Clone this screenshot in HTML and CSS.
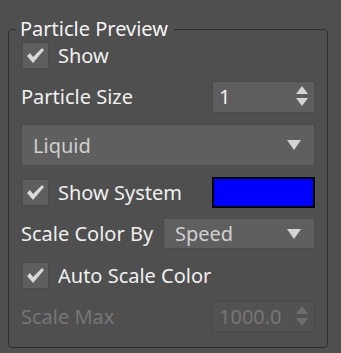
FILE: index.html
```html
<!DOCTYPE html>
<html lang="en">
<head>
    <meta charset="UTF-8">
    <title>Particle Preview</title>
    <link rel="stylesheet" href="styles.css">
</head>
<body>
    <fieldset class="group">
        <legend>Particle Preview</legend>

        <div class="row row-check">
            <span class="check">
                <svg width="27" height="27" viewBox="0 0 27 27"><path d="M5 14 L8 11 L11 15 L20 6 L22 8 L11 21 Z" fill="#d8d8d8"/></svg>
            </span>
            <span class="label">Show</span>
        </div>

        <div class="row row-spin">
            <span class="label">Particle Size</span>
            <div class="spin">
                <span class="spin-value">1</span>
                <span class="arrows">
                    <svg width="12" height="21" viewBox="0 0 12 21"><path d="M6 0 L12 8 L0 8 Z M0 12 L12 12 L6 20 Z" fill="#d4d4d4"/></svg>
                </span>
            </div>
        </div>

        <div class="row row-combo">
            <div class="combo combo-wide">
                <span class="combo-value">Liquid</span>
                <svg width="14" height="10" viewBox="0 0 14 10"><path d="M0 0 L14 0 L7 10 Z" fill="#d4d4d4"/></svg>
            </div>
        </div>

        <div class="row row-swatch">
            <span class="check">
                <svg width="27" height="27" viewBox="0 0 27 27"><path d="M5 14 L8 11 L11 15 L20 6 L22 8 L11 21 Z" fill="#d8d8d8"/></svg>
            </span>
            <span class="label">Show System</span>
            <span class="swatch"></span>
        </div>

        <div class="row row-by">
            <span class="label">Scale Color By</span>
            <div class="combo combo-small">
                <span class="combo-value">Speed</span>
                <svg width="14" height="10" viewBox="0 0 14 10"><path d="M0 0 L14 0 L7 10 Z" fill="#d4d4d4"/></svg>
            </div>
        </div>

        <div class="row row-check2">
            <span class="check">
                <svg width="27" height="27" viewBox="0 0 27 27"><path d="M5 14 L8 11 L11 15 L20 6 L22 8 L11 21 Z" fill="#d8d8d8"/></svg>
            </span>
            <span class="label">Auto Scale Color</span>
        </div>

        <div class="row row-disabled">
            <span class="label">Scale Max</span>
            <div class="spin">
                <span class="spin-value">1000.0</span>
                <span class="arrows">
                    <svg width="12" height="21" viewBox="0 0 12 21"><path d="M6 0 L12 8 L0 8 Z M0 12 L12 12 L6 20 Z" fill="#6e6e6e"/></svg>
                </span>
            </div>
        </div>
    </fieldset>
</body>
</html>
```

FILE: styles.css
```css
body {
    margin: 0;
    width: 341px;
    height: 353px;
    background-color: #4f4f4f;
    font-family: "Noto Sans", "Open Sans", sans-serif;
    font-size: 20px;
    color: #f0f0f0;
    overflow: hidden;
}
.group {
    box-sizing: border-box;
    margin: 17px 0 0 8px;
    width: 320px;
    height: 331px;
    padding: 0 12px 0 12px;
    border: 1px solid #2e2e2e;
    border-radius: 4px;
    display: flex;
    flex-direction: column;
    gap: 11px;
}
.group legend {
    padding: 0 6px 0 4px;
    margin-left: -5px;
    line-height: 24px;
    color: #f4f4f4;
}
.row {
    display: flex;
    align-items: center;
}
.row-check { height: 27px; margin-top: 1px; }
.row-spin { height: 33px; justify-content: space-between; }
.row-combo { height: 42px; }
.row-swatch { height: 30px; }
.row-by { height: 31px; justify-content: space-between; }
.row-check2 { height: 30px; }
.row-disabled { height: 31px; justify-content: space-between; color: #767676; }

.check {
    box-sizing: border-box;
    width: 27px;
    height: 27px;
    margin-left: 1px;
    margin-right: 9px;
    background-color: #5e5e5e;
    border: 1px solid #4a4a4a;
    display: flex;
}
.check svg {
    margin: -1px;
}
.spin {
    box-sizing: border-box;
    width: 103px;
    height: 32px;
    background-color: #5e5e5e;
    border: 1px solid #4a4a4a;
    display: flex;
    align-items: center;
    justify-content: space-between;
    padding: 0 6px 0 6px;
}
.arrows {
    display: flex;
}
.row-disabled .spin {
    height: 31px;
    background-color: #525252;
    border-color: #474747;
}
.combo {
    box-sizing: border-box;
    height: 100%;
    background-color: #5f5f5f;
    border: 1px solid #4a4a4a;
    display: flex;
    align-items: center;
    justify-content: space-between;
    padding: 0 13px 0 11px;
    color: #d0d0d0;
}
.combo-wide {
    width: 294px;
}
.combo-small {
    width: 152px;
}
.swatch {
    box-sizing: border-box;
    margin-left: auto;
    width: 103px;
    height: 31px;
    background-color: #0000ff;
    border: 2px solid #000;
}
```
